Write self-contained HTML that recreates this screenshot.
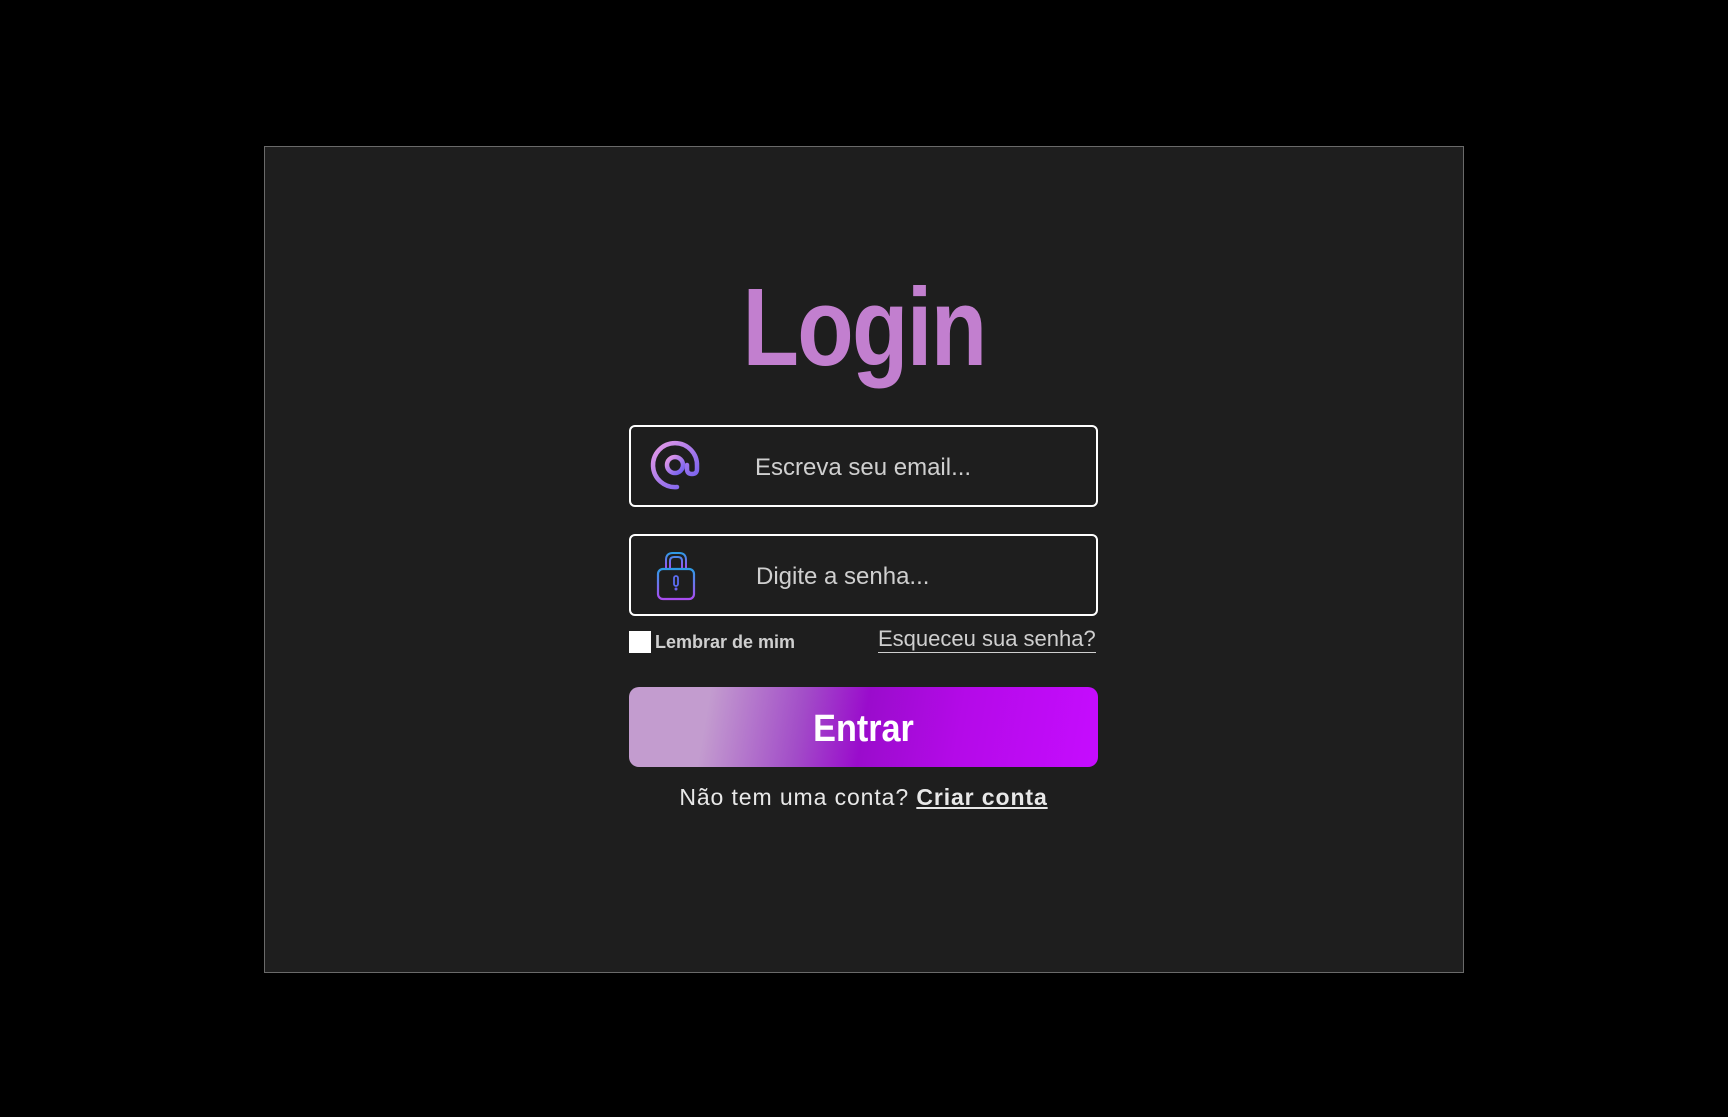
<!DOCTYPE html>
<html><head><meta charset="utf-8"><style>
html,body{margin:0;padding:0;background:#000;width:1728px;height:1117px;overflow:hidden;font-family:"Liberation Sans",sans-serif}
.card{position:absolute;left:264px;top:146px;width:1198px;height:825px;background:#1e1e1e;border:1px solid #6a6a6a}
.abs{position:absolute}
.title{left:0;width:1728px;text-align:center;top:264px;font-size:110px;font-weight:bold;color:#c27fcf;transform:scaleX(0.84);letter-spacing:-2px}
.box{left:629px;width:469px;border:2px solid #fff;border-radius:6px;box-sizing:border-box}
.ph{font-size:24px;color:#cfcfcf}
</style></head><body>
<div class="card"></div>
<div class="abs title">Login</div>
<div class="abs box" style="top:425px;height:82px"></div>
<div class="abs box" style="top:534px;height:82px"></div>
<svg class="abs" style="left:650px;top:440px" width="52" height="52" viewBox="0 0 52 52">
<defs><linearGradient id="g1" x1="0" y1="0" x2="1" y2="1"><stop offset="0" stop-color="#e99be6"/><stop offset="1" stop-color="#6c5cf0"/></linearGradient></defs>
<path d="M27 47 A22 22 0 1 1 47 26 V29 Q47 34 42 34 Q37 34 37 29 V25" fill="none" stroke="url(#g1)" stroke-width="4.5" stroke-linecap="round"/>
<circle cx="25" cy="25" r="8" fill="none" stroke="url(#g1)" stroke-width="4.5"/>
</svg>
<svg class="abs" style="left:655px;top:551px" width="42" height="50" viewBox="0 0 42 50">
<defs><linearGradient id="g2" x1="0" y1="0" x2="0" y2="1"><stop offset="0" stop-color="#2e9be6"/><stop offset="1" stop-color="#a94cf0"/></linearGradient></defs>
<path d="M11 18 V9 Q11 2 18 2 H24 Q31 2 31 9 V18 M15 18 V10 Q15 6 19 6 H23 Q27 6 27 10 V18" fill="none" stroke="url(#g2)" stroke-width="2"/>
<rect x="3" y="18" width="36" height="30" rx="5" fill="none" stroke="url(#g2)" stroke-width="2.2"/>
<rect x="19" y="25" width="4" height="10" rx="2" fill="none" stroke="#5b6cf0" stroke-width="1.8"/><circle cx="21" cy="38" r="1.5" fill="#6a60f0"/>
</svg>
<div class="abs ph" style="left:755px;top:454px">Escreva seu email...</div>
<div class="abs ph" style="left:756px;top:563px">Digite a senha...</div>
<div class="abs" style="left:629px;top:631px;width:22px;height:22px;background:#fff"></div>
<div class="abs" style="left:655px;top:632px;font-size:18px;font-weight:bold;color:#cfcfcf">Lembrar de mim</div>
<div class="abs" style="left:878px;top:625px;font-size:22px;color:#cfcfcf;border-bottom:1.5px solid #cfcfcf;line-height:27px">Esqueceu sua senha?</div>
<div class="abs" style="left:629px;top:687px;width:469px;height:80px;border-radius:10px;background:linear-gradient(100deg,#c39ccf 0%,#c39ccf 17%,#a24cc8 37%,#9a0ccc 50%,#b40ae8 70%,#c60cff 100%)"></div>
<div class="abs" style="left:629px;top:708px;width:469px;text-align:center;font-size:38px;color:#fff;font-weight:bold;transform:scaleX(0.9)">Entrar</div>
<div class="abs" style="left:629px;top:784px;width:469px;text-align:center;font-size:23px;color:#e8e8e8;letter-spacing:0.9px">Não tem uma conta? <b style="text-decoration:underline">Criar conta</b></div>
</body></html>
